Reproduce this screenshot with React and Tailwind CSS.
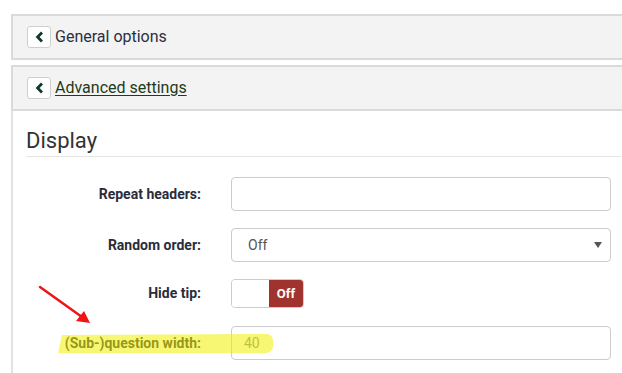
function PanelHeader({ title, link }) {
  return (
    <div className="flex h-[46px] items-center gap-[4px] border-y-2 border-l-2 border-[#dadada] bg-[#f3f3f3] pl-[14px]">
      <button className="flex h-[22px] w-[24px] items-center justify-center rounded-[3px] border border-[#cfcfcf] bg-white">
        <svg width="9" height="12" viewBox="0 0 9 12">
          <path d="M7 1.5 L2.6 6 L7 10.5" fill="none" stroke="#0f3b26" strokeWidth="2.8" strokeLinejoin="miter" />
        </svg>
      </button>
      <span className={link ? 'text-[16px] text-[#1e3a20] underline underline-offset-2' : 'text-[16px] text-[#2b2e42]'}>
        {title}
      </span>
    </div>
  )
}

function Row({ label, children, mb = 'mb-[17px]' }) {
  return (
    <div className={`grid grid-cols-[175px_380px] items-center gap-x-[30px] ${mb}`}>
      <label className="text-right text-[14px] font-bold text-[#2a2c3c]">{label}</label>
      {children}
    </div>
  )
}

export default function App() {
  return (
    <div className="relative h-[373px] w-[622px] overflow-hidden bg-white pl-[11px] pt-[14px] font-['Roboto',sans-serif]">
      <div className="w-[630px] rounded-tl-[4px]">
        <PanelHeader title="General options" />
      </div>

      <div className="mt-[5px] w-[630px]">
        <PanelHeader title="Advanced settings" link />
        <div className="h-[300px] border-l-2 border-[#e2e2e2] pl-[13px] pt-[18px]">
          <h3 className="mr-[20px] border-b border-[#e5e5e5] pb-[3px] text-[22px] leading-[24px] text-[#333]">Display</h3>

          <div className="mt-[20px]">
            <Row label="Repeat headers:">
              <input className="h-[34px] rounded-[4px] border border-[#cccccc] bg-white" />
            </Row>

            <Row label="Random order:">
              <div className="flex h-[34px] items-center justify-between rounded-[4px] border border-[#cccccc] bg-white pl-[16px] pr-[8px] text-[14px] text-[#555]">
                <span>Off</span>
                <svg width="8" height="6" viewBox="0 0 8 6"><path d="M0 0h8L4 6z" fill="#555" /></svg>
              </div>
            </Row>

            <Row label="Hide tip:" mb="mb-[18px]">
              <div className="flex h-[29px] w-[73px] overflow-hidden rounded-[4px] border border-[#cccccc]">
                <div className="w-[37px] bg-white" />
                <div className="flex flex-1 items-center justify-center bg-[#a1332f] text-[13px] font-bold text-white">Off</div>
              </div>
            </Row>

            <Row label="(Sub-)question width:">
              <div className="flex h-[34px] items-center rounded-[4px] border border-[#cccccc] bg-white pl-[12px] text-[14px] text-[#888]">40</div>
            </Row>
          </div>
        </div>
      </div>

      {/* annotations */}
      <svg className="pointer-events-none absolute left-0 top-0" width="622" height="373">
        <path
          d="M62 335 L268 334 Q274 336 273 344 Q274 352 266 353 L58 353 Z"
          fill="#f0f000"
          opacity="0.55"
        />
        <line x1="40" y1="287" x2="82" y2="317" stroke="#f01414" strokeWidth="2.5" strokeLinecap="round" />
        <path d="M90 323 L76 321 L84 311 Z" fill="#f01414" />
      </svg>
    </div>
  )
}
